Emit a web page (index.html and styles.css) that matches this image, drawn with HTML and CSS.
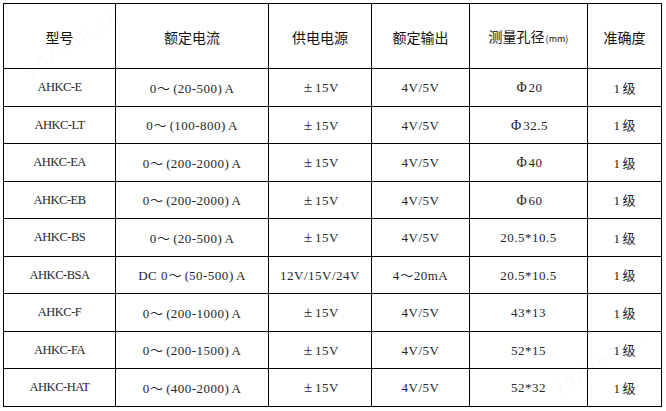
FILE: index.html
```html
<!DOCTYPE html>
<html lang="zh-CN">
<head>
<meta charset="utf-8">
<title>AHKC 型号参数表</title>
<link rel="stylesheet" href="styles.css">
</head>
<body>
<div class="page">
  <table class="spec">
    <colgroup>
      <col class="c1"><col class="c2"><col class="c3"><col class="c4"><col class="c5"><col class="c6">
    </colgroup>
    <thead>
      <tr>
        <th>型号</th>
        <th>额定电流</th>
        <th>供电电源</th>
        <th>额定输出</th>
        <th>测量孔径<span class="unit">(mm)</span></th>
        <th>准确度</th>
      </tr>
    </thead>
    <tbody>
      <tr><td class="model">AHKC-E</td><td>0<span class="fw">～</span><span class="po">(</span>20-500<span class="pc">)</span>A</td><td><span class="pm">±</span>15V</td><td>4V/5V</td><td><span class="ph">Φ</span>20</td><td>1<span class="cj">级</span></td></tr>
      <tr><td class="model">AHKC-LT</td><td>0<span class="fw">～</span><span class="po">(</span>100-800<span class="pc">)</span>A</td><td><span class="pm">±</span>15V</td><td>4V/5V</td><td><span class="ph">Φ</span>32.5</td><td>1<span class="cj">级</span></td></tr>
      <tr><td class="model">AHKC-EA</td><td>0<span class="fw">～</span><span class="po">(</span>200-2000<span class="pc">)</span>A</td><td><span class="pm">±</span>15V</td><td>4V/5V</td><td><span class="ph">Φ</span>40</td><td>1<span class="cj">级</span></td></tr>
      <tr><td class="model">AHKC-EB</td><td>0<span class="fw">～</span><span class="po">(</span>200-2000<span class="pc">)</span>A</td><td><span class="pm">±</span>15V</td><td>4V/5V</td><td><span class="ph">Φ</span>60</td><td>1<span class="cj">级</span></td></tr>
      <tr><td class="model">AHKC-BS</td><td>0<span class="fw">～</span><span class="po">(</span>20-500<span class="pc">)</span>A</td><td><span class="pm">±</span>15V</td><td>4V/5V</td><td>20.5*10.5</td><td>1<span class="cj">级</span></td></tr>
      <tr><td class="model">AHKC-BSA</td><td>DC 0<span class="fw">～</span><span class="po">(</span>50-500<span class="pc">)</span>A</td><td>12V/15V/24V</td><td>4<span class="fw">～</span>20mA</td><td>20.5*10.5</td><td>1<span class="cj">级</span></td></tr>
      <tr><td class="model">AHKC-F</td><td>0<span class="fw">～</span><span class="po">(</span>200-1000<span class="pc">)</span>A</td><td><span class="pm">±</span>15V</td><td>4V/5V</td><td>43*13</td><td>1<span class="cj">级</span></td></tr>
      <tr><td class="model">AHKC-FA</td><td>0<span class="fw">～</span><span class="po">(</span>200-1500<span class="pc">)</span>A</td><td><span class="pm">±</span>15V</td><td>4V/5V</td><td>52*15</td><td>1<span class="cj">级</span></td></tr>
      <tr><td class="model">AHKC-HAT</td><td>0<span class="fw">～</span><span class="po">(</span>400-2000<span class="pc">)</span>A</td><td><span class="pm">±</span>15V</td><td>4V/5V</td><td>52*32</td><td>1<span class="cj">级</span></td></tr>
    </tbody>
  </table>
  <div class="wm wm-a">ybzhan.cn</div>
  <div class="wm wm-b">ybzhan.cn</div>
</div>
</body>
</html>
```
FILE: styles.css
```css
html, body {
  margin: 0;
  padding: 0;
  background: #ffffff;
}

.page {
  position: relative;
  padding: 3px 0 0 3px;
  width: 666px;
  height: 411px;
  box-sizing: border-box;
  overflow: hidden;
}

.spec {
  border-collapse: collapse;
  table-layout: fixed;
  width: 659px;
  color: #1a1a1a;
}

.c1 { width: 112px; }
.c2 { width: 153px; }
.c3 { width: 103px; }
.c4 { width: 98px; }
.c5 { width: 118px; }
.c6 { width: 74px; }

.spec th,
.spec td {
  border: 1px solid #000;
  padding: 0;
  text-align: center;
  vertical-align: middle;
  white-space: nowrap;
}

.spec th {
  height: 62px;
  font-family: "Noto Sans CJK SC", sans-serif;
  font-size: 14px;
  font-weight: normal;
  line-height: 16px;
  padding-top: 2px;
  color: #111;
}

.spec .unit {
  font-size: 9px;
  margin-left: 1px;
}

.spec td {
  font-family: "Liberation Serif", serif;
  font-size: 13px;
  letter-spacing: 0.5px;
  line-height: 15px;
  color: #262626;
}

.spec tbody tr:nth-child(odd) td { height: 37px; }
.spec tbody tr:nth-child(even) td { height: 36px; }

.spec td.model {
  font-size: 12.5px;
  letter-spacing: -0.5px;
}

.fw,
.cj {
  font-family: "Noto Sans CJK SC", sans-serif;
  letter-spacing: 0;
  font-size: 13px;
}

.fw {
  display: inline-block;
  width: 14px;
  text-align: center;
}

.po,
.pc {
  display: inline-block;
  width: 7px;
  letter-spacing: 0;
}

.po { text-align: right; }
.pc { text-align: left; }

.pm,
.ph {
  display: inline-block;
  width: 14px;
  letter-spacing: 0;
  text-align: center;
}

.pm { font-size: 15px; }
.ph { font-size: 14px; }

.cj {
  margin-left: 2px;
}

.wm {
  position: absolute;
  width: 120px;
  height: 22px;
  font-family: "Liberation Sans", sans-serif;
  font-size: 19px;
  line-height: 22px;
  text-align: center;
  color: rgba(0, 0, 0, 0.035);
  transform: rotate(-33deg);
  transform-origin: center;
  pointer-events: none;
  letter-spacing: 2.5px;
}

.wm-a { left: 13px; top: 31px; }
.wm-b { left: 540px; top: 349px; }
```
